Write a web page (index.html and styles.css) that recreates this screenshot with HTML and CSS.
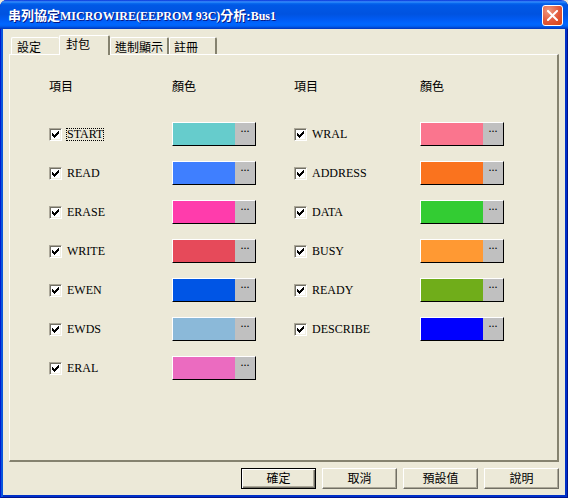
FILE: index.html
```html
<!DOCTYPE html>
<html lang="zh-Hant">
<head>
    <meta charset="UTF-8">
    <title>串列協定MICROWIRE(EEPROM 93C)分析:Bus1</title>
    <link rel="stylesheet" href="styles.css">
</head>
<body>
    <div class="window">
        <header class="title-bar">
            <h1><span class="cjk">串列協定</span>MICROWIRE(EEPROM 93C)<span class="cjk">分析:</span>Bus1</h1>
            <button type="button" class="close-button" aria-label="關閉">
                <svg width="11" height="11" viewBox="0 0 11 11">
                    <path d="M1 1L10 10M10 1L1 10" stroke="#fff" stroke-width="2" stroke-linecap="square"/>
                </svg>
            </button>
        </header>
        <form class="dialog">
            <div class="tabs" role="tablist">
                <button type="button" class="tab tab-first" role="tab">設定</button>
                <button type="button" class="tab active" role="tab" aria-selected="true">封包</button>
                <button type="button" class="tab" role="tab">進制顯示</button>
                <button type="button" class="tab" role="tab">註冊</button>
            </div>
            <div class="panel" role="tabpanel">
                <div class="group">
                    <div class="row heading"><span>項目</span><span class="color-heading">顏色</span></div>
                    <div class="row">
                        <label class="focused"><input type="checkbox" checked><span>START</span></label>
                        <button type="button" class="picker"><i class="color start"></i><span class="more">...</span></button>
                    </div>
                    <div class="row">
                        <label><input type="checkbox" checked><span>READ</span></label>
                        <button type="button" class="picker"><i class="color read"></i><span class="more">...</span></button>
                    </div>
                    <div class="row">
                        <label><input type="checkbox" checked><span>ERASE</span></label>
                        <button type="button" class="picker"><i class="color erase"></i><span class="more">...</span></button>
                    </div>
                    <div class="row">
                        <label><input type="checkbox" checked><span>WRITE</span></label>
                        <button type="button" class="picker"><i class="color write"></i><span class="more">...</span></button>
                    </div>
                    <div class="row">
                        <label><input type="checkbox" checked><span>EWEN</span></label>
                        <button type="button" class="picker"><i class="color ewen"></i><span class="more">...</span></button>
                    </div>
                    <div class="row">
                        <label><input type="checkbox" checked><span>EWDS</span></label>
                        <button type="button" class="picker"><i class="color ewds"></i><span class="more">...</span></button>
                    </div>
                    <div class="row">
                        <label><input type="checkbox" checked><span>ERAL</span></label>
                        <button type="button" class="picker"><i class="color eral"></i><span class="more">...</span></button>
                    </div>
                </div>
                <div class="group">
                    <div class="row heading"><span>項目</span><span class="color-heading">顏色</span></div>
                    <div class="row">
                        <label><input type="checkbox" checked><span>WRAL</span></label>
                        <button type="button" class="picker"><i class="color wral"></i><span class="more">...</span></button>
                    </div>
                    <div class="row">
                        <label><input type="checkbox" checked><span>ADDRESS</span></label>
                        <button type="button" class="picker"><i class="color address"></i><span class="more">...</span></button>
                    </div>
                    <div class="row">
                        <label><input type="checkbox" checked><span>DATA</span></label>
                        <button type="button" class="picker"><i class="color data"></i><span class="more">...</span></button>
                    </div>
                    <div class="row">
                        <label><input type="checkbox" checked><span>BUSY</span></label>
                        <button type="button" class="picker"><i class="color busy"></i><span class="more">...</span></button>
                    </div>
                    <div class="row">
                        <label><input type="checkbox" checked><span>READY</span></label>
                        <button type="button" class="picker"><i class="color ready"></i><span class="more">...</span></button>
                    </div>
                    <div class="row">
                        <label><input type="checkbox" checked><span>DESCRIBE</span></label>
                        <button type="button" class="picker"><i class="color describe"></i><span class="more">...</span></button>
                    </div>
                </div>
            </div>
            <div class="actions">
                <button type="submit" class="action default">確定</button>
                <button type="button" class="action">取消</button>
                <button type="button" class="action">預設值</button>
                <button type="button" class="action">說明</button>
            </div>
        </form>
    </div>
</body>
</html>
```
FILE: styles.css
```css
* {
    box-sizing: border-box;
}

body {
    margin: 0;
    background-color: #ece9d8;
    color: #000;
    font-family: "Liberation Serif", "Noto Sans CJK TC", serif;
    font-size: 12px;
    line-height: 16px;
}

button {
    margin: 0;
    padding: 0;
    border: none;
    background: none;
    color: inherit;
    font: inherit;
}

.window {
    display: flex;
    flex-direction: column;
    min-height: 100vh;
    padding: 0 3px 3px;
    border-radius: 7px 7px 0 0;
    background-color: #ece9d8;
    box-shadow: inset 1px 0 #0019cf, inset -1px -1px #00138c, inset 3px 0 #0855dd, inset -3px -3px #0030c8;
}

/* Title bar */
.title-bar {
    display: flex;
    align-items: center;
    justify-content: space-between;
    height: 29px;
    margin: 0 -3px;
    padding: 2px 5px 0 8px;
    border-radius: 7px 7px 0 0;
    background: linear-gradient(#0831d9 0, #3a93ff 2px, #0a6cf0 3px, #0058e6 5px, #0053e0 14px, #005cf5 20px, #0066ff 24px, #0062f5 26px, #0043cf 28px, #0036b8 29px);
}

.title-bar h1 {
    margin: 0;
    color: #fff;
    font-size: 12px;
    font-weight: bold;
    text-shadow: 1px 1px #0a1883;
}

.title-bar .cjk {
    font-size: 13px;
}

.close-button {
    display: flex;
    align-items: center;
    justify-content: center;
    width: 21px;
    height: 21px;
    border: 1px solid #fff;
    border-radius: 3px;
    background: radial-gradient(circle at 30% 25%, #ee9a80, #e2583a 55%, #d8430f);
}

.dialog {
    display: flex;
    flex: 1;
    flex-direction: column;
    padding: 6px;
}

/* Tabs */
.tabs {
    display: flex;
    align-items: flex-end;
    height: 19px;
    padding-left: 2px;
}

.tab {
    min-width: 48px;
    height: 17px;
    padding: 2px 4px 0;
    border-top: 1px solid #fff;
    border-left: 1px solid #fff;
    border-right: 2px solid #85826f;
    border-radius: 2px 2px 0 0;
    text-align: left;
}

.tab-first {
    padding-left: 5px;
    border-right: none;
}

.tab.active {
    position: relative;
    height: 20px;
    margin-bottom: -1px;
    padding: 0 18px 2px 6px;
    background-color: #ece9d8;
}

/* Panel with the list of packet items */
.panel {
    display: grid;
    flex: 1;
    grid-template-columns: 245fr 210fr;
    align-content: start;
    padding: 20px 53px 20px 39px;
    border-style: solid;
    border-width: 1px 2px 2px 1px;
    border-color: #fff #85826f #85826f #fff;
}

.group {
    display: flex;
    flex-direction: column;
    gap: 15px;
}

.group:first-child {
    padding-right: 38px;
}

.row {
    display: flex;
    align-items: center;
    justify-content: space-between;
    height: 24px;
}

.heading {
    margin-bottom: 8px;
}

.color-heading {
    width: 84px;
}

label {
    display: flex;
    align-items: center;
    gap: 4px;
}

label span {
    padding: 0 1px;
    line-height: 13px;
}

.focused span {
    outline: 1px dotted #000;
    outline-offset: -1px;
}

input[type="checkbox"] {
    width: 13px;
    height: 13px;
    margin: 0;
    appearance: none;
    border: 1px solid;
    border-color: #aca899 #fff #fff #aca899;
    background-color: #fff;
    box-shadow: inset 1px 1px #716f64, inset -1px -1px #f1efe2;
}

input[type="checkbox"]:checked {
    background-image: url('data:image/svg+xml,<svg xmlns="http://www.w3.org/2000/svg" width="7" height="7"><path d="M0 2h1v1h1v1h1v-1h1v-1h1v-1h1v-1h1v3h-1v1h-1v1h-1v1h-1v1h-1v-1h-1v-1h-1z"/></svg>');
    background-position: 2px 2px;
    background-repeat: no-repeat;
}

.picker {
    display: flex;
    width: 84px;
    height: 24px;
    border: 1px solid;
    border-color: #fff #000 #000 #fff;
}

.color {
    flex: 1;
    align-self: stretch;
}

.more {
    align-self: stretch;
    width: 20px;
    background-color: #c0c0c0;
    line-height: 10px;
    text-align: center;
}

.start { background-color: #66cccc; }
.read { background-color: #3f7fff; }
.erase { background-color: #ff3cac; }
.write { background-color: #e64a5a; }
.ewen { background-color: #0055e5; }
.ewds { background-color: #8bb9d9; }
.eral { background-color: #eb6bc0; }
.wral { background-color: #fa758e; }
.address { background-color: #fa731e; }
.data { background-color: #33cc33; }
.busy { background-color: #ff9933; }
.ready { background-color: #70ad1a; }
.describe { background-color: #0000ff; }

/* Bottom buttons */
.actions {
    display: flex;
    justify-content: flex-end;
    gap: 6px;
    margin-top: 6px;
}

.action {
    width: 75px;
    height: 21px;
    border: 1px solid;
    border-color: #fff #716f64 #716f64 #fff;
    box-shadow: inset -1px -1px #aca899;
}

.action.default {
    border-color: #000;
    box-shadow: inset 1px 1px #fff, inset -1px -1px #716f64, inset -2px -2px #aca899;
}
```
